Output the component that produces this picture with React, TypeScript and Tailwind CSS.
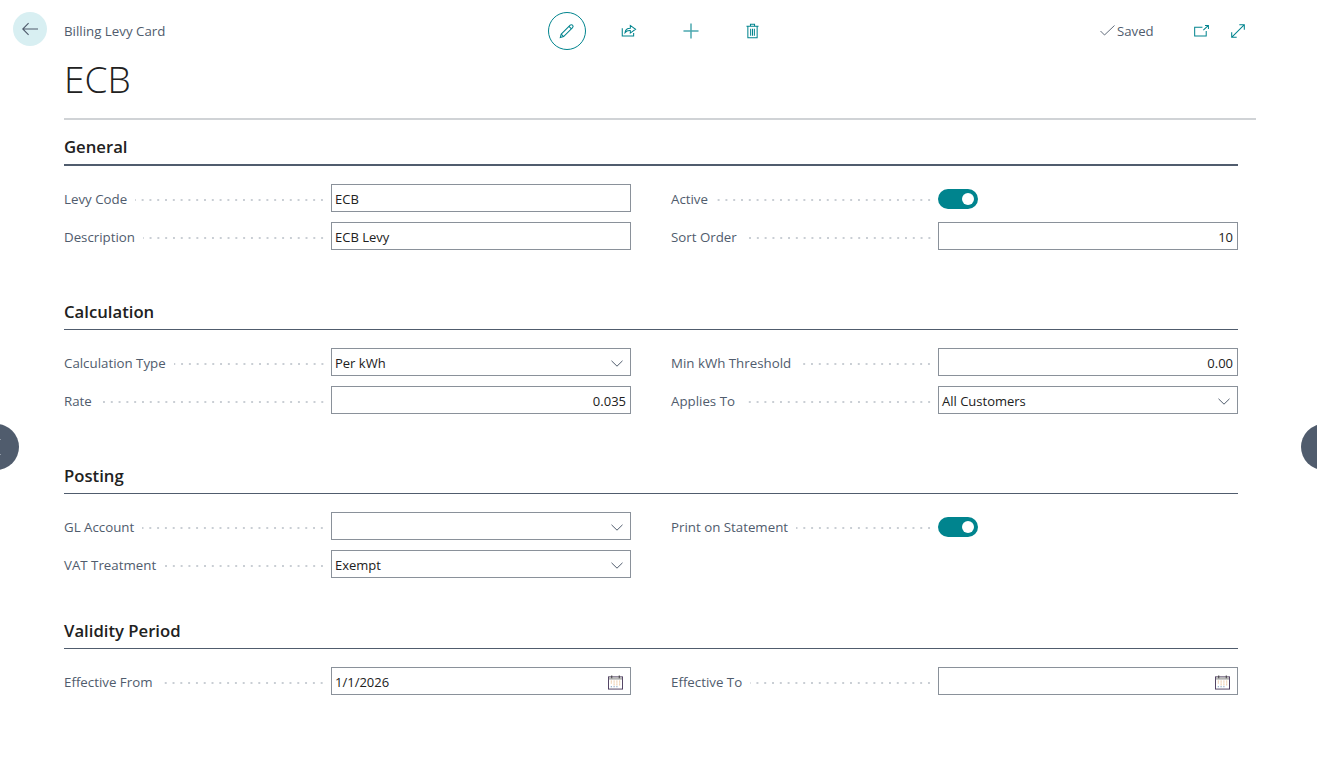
const teal = "#00848e";

function Pencil() {
  return (
    <svg width="16" height="16" viewBox="0 0 18 18" fill="none" stroke={teal} strokeWidth="1.200">
      <path d="M2.5 12.5 12.6 2.400c.7-.7 1.800-.7 2.600.1.800.8.800 1.900.1 2.600L5.200 15.200 1.500 16.300z" />
      <path d="M11.200 3.800l2.800 2.800M2.500 12.500l2.700 2.700" />
    </svg>
  );
}

function Share() {
  return (
    <svg width="16" height="14" viewBox="0 0 17 16" fill="none" stroke={teal} strokeWidth="1.200">
      <path d="M.8 6v8.800h13V11.500" />
      <path d="M4 11c.2-3 2.300-5 6-5V2.800l6 4.400-6 4.300V8.700c-2.500-.2-4.600.5-6 2.300z" />
    </svg>
  );
}

function Plus() {
  return (
    <svg width="16" height="16" viewBox="0 0 17 17" stroke={teal} strokeWidth="1.600" opacity="0.7">
      <path d="M8.500.5v16M.5 8.500h16" />
    </svg>
  );
}

function Trash() {
  return (
    <svg width="13" height="16" viewBox="0 0 14 16" fill="none" stroke={teal} strokeWidth="1.100">
      <path d="M.5 2.800h13M2 2.800V15.300h10V2.800M4.800 2.800V.8h4.400v2M5 5.500v7.500M7 5.500v7.500M9 5.500v7.500" />
    </svg>
  );
}

function Popout() {
  return (
    <svg width="15" height="12" viewBox="0 0 16 13" fill="none" stroke={teal} strokeWidth="1.100">
      <path d="M9 2.500H.6v9.500h12.500V6.500" />
      <path d="M10 5.500 15.200.8M11.800.6h3.700v3.600" />
    </svg>
  );
}

function Expand() {
  return (
    <svg width="14" height="14" viewBox="0 0 16 16" fill="none" stroke={teal} strokeWidth="1.200">
      <path d="M1 15 15 1M9.500.8h5.700v5.700M.8 9.500v5.700h5.700" />
    </svg>
  );
}

function Chevron() {
  return (
    <svg width="12" height="7" viewBox="0 0 12 7" fill="none" stroke="#505c6d" strokeWidth="1" className="mt-[2px] shrink-0">
      <path d="M.5.800 6 6.200 11.500.8" />
    </svg>
  );
}

function CalendarIcon() {
  return (
    <svg width="15" height="15" viewBox="0 0 16 15" className="mt-[2px] shrink-0">
      <rect x="0.500" y="1.500" width="15" height="13" fill="#fff" stroke="#4a3a5c" />
      <rect x="1" y="2" width="14" height="2.500" fill="#b5b5b5" />
      <path d="M4 0v3M12 0v3" stroke="#333" />
      <path d="M3 6h1M6 6h1M9 6h1M12 6h1M3 8h1M6 8h1M9 8h1M12 8h1M6 10h1M9 10h1M12 10h1" stroke="#e0a468" />
      <path d="M3 12h1M6 12h1M9 12h1" stroke="#4a78a8" />
    </svg>
  );
}

function Toggle() {
  return (
    <div className="mt-[2px] flex h-[20px] w-[40px] items-center justify-end rounded-full bg-[#00848e] pr-[4px]">
      <div className="h-[12px] w-[12px] rounded-full bg-white" />
    </div>
  );
}

type Field = {
  label: string;
  value?: string;
  kind?: "text" | "number" | "select" | "date" | "toggle";
};

function FieldRow({ field }: { field: Field }) {
  const kind = field.kind ?? "text";
  return (
    <div className="flex h-[28px] items-center">
      <div className="flex h-[28px] w-[267px] shrink-0 items-center pt-[3px] pr-[5px]">
        <span className="text-[13.3px] whitespace-nowrap text-[#505c6d]">{field.label}</span>
        <span className="ml-[8px] h-[4px] flex-1 bg-[radial-gradient(circle,#c9ced4_1px,transparent_1.2px)] bg-[length:7.8px_4px] bg-right bg-repeat-x" />
      </div>
      {kind === "toggle" ? (
        <Toggle />
      ) : (
        <div className="flex h-[28px] w-[300px] items-center justify-between border border-[#8a919a] bg-white pr-[7px] pl-[3px] text-[13px] text-[#212121]">
          {kind === "number" ? (
            <span className="-mr-[3px] ml-auto pt-[4px]">{field.value}</span>
          ) : (
            <span className="pt-[4px]">{field.value}</span>
          )}
          {kind === "select" && <Chevron />}
          {kind === "date" && <CalendarIcon />}
        </div>
      )}
    </div>
  );
}

type Section = {
  title: string;
  left: Field[];
  right: Field[];
  ruleClass: string;
  bodyClass: string;
};

const sections: Section[] = [
  {
    title: "General",
    ruleClass: "border-b-2 border-[#505c6d] leading-[24px]",
    bodyClass: "h-[133px]",
    left: [
      { label: "Levy Code", value: "ECB" },
      { label: "Description", value: "ECB Levy" },
    ],
    right: [
      { label: "Active", kind: "toggle" },
      { label: "Sort Order", value: "10", kind: "number" },
    ],
  },
  {
    title: "Calculation",
    ruleClass: "border-b border-[#505c6d] leading-[25px]",
    bodyClass: "h-[133px]",
    left: [
      { label: "Calculation Type", value: "Per kWh", kind: "select" },
      { label: "Rate", value: "0.035", kind: "number" },
    ],
    right: [
      { label: "Min kWh Threshold", value: "0.00", kind: "number" },
      { label: "Applies To", value: "All Customers", kind: "select" },
    ],
  },
  {
    title: "Posting",
    ruleClass: "border-b border-[#505c6d] leading-[25px]",
    bodyClass: "h-[124px]",
    left: [
      { label: "GL Account", value: "", kind: "select" },
      { label: "VAT Treatment", value: "Exempt", kind: "select" },
    ],
    right: [{ label: "Print on Statement", kind: "toggle" }],
  },
  {
    title: "Validity Period",
    ruleClass: "border-b border-[#505c6d] leading-[25px]",
    bodyClass: "",
    left: [{ label: "Effective From", value: "1/1/2026", kind: "date" }],
    right: [{ label: "Effective To", value: "", kind: "date" }],
  },
];

export default function App() {
  return (
    <div className="relative h-[759px] w-[1317px] overflow-hidden bg-white font-['Open_Sans','Liberation_Sans',sans-serif]">
      {/* Page header */}
      <div className="flex h-[62px] items-center pl-[13px]">
        <button className="-mt-[4px] flex h-[34px] w-[34px] items-center justify-center rounded-full bg-[#d8eff2]">
          <svg width="16" height="14" viewBox="0 0 17 14" fill="none" stroke="#505c6d" strokeWidth="1.200">
            <path d="M17 7H.8M7 .8.800 7 7 13.200" />
          </svg>
        </button>
        <span className="ml-[17px] w-[484px] pt-[1px] text-[13.3px] text-[#505c6d]">Billing Levy Card</span>
        <div className="flex h-[38px] w-[38px] items-center justify-center rounded-full border border-[#00848e]">
          <Pencil />
        </div>
        <div className="ml-[35px] flex -translate-y-[1px]"><Share /></div>
        <div className="ml-[46px] flex"><Plus /></div>
        <div className="ml-[47px] flex"><Trash /></div>
        <div className="ml-[341px] flex items-center gap-[2px] text-[13.2px] text-[#505c6d]">
          <svg width="15" height="11" viewBox="0 0 15 11" fill="none" stroke="#505c6d" strokeWidth="0.900">
            <path d="M.5 6 4.500 10 14.500.5" />
          </svg>
          <span className="pt-[2px]">Saved</span>
        </div>
        <div className="ml-[40px] flex"><Popout /></div>
        <div className="ml-[22px] flex"><Expand /></div>
      </div>

      <h1 className="-mt-[2px] h-[38px] pl-[64px] text-[37px] leading-[38px] font-light text-[#212121]">ECB</h1>
      <div className="mt-[20px] ml-[64px] h-[2px] w-[1192px] bg-[#d0d3d6]" />

      {/* Sections */}
      <div className="mr-[79px] ml-[64px] pt-[15px]">
        {sections.map((section) => (
          <section key={section.title}>
            <h2 className={`h-[31px] text-[16.7px] font-semibold text-[#212121] ${section.ruleClass}`}>
              {section.title}
            </h2>
            <div className={`grid grid-cols-2 gap-x-[40px] pt-[18px] ${section.bodyClass}`}>
              <div className="flex flex-col gap-[10px]">
                {section.left.map((f) => (
                  <FieldRow key={f.label} field={f} />
                ))}
              </div>
              <div className="flex flex-col gap-[10px]">
                {section.right.map((f) => (
                  <FieldRow key={f.label} field={f} />
                ))}
              </div>
            </div>
          </section>
        ))}
      </div>

      {/* Side paging handles */}
      <div className="absolute top-[424px] -left-[27px] h-[46px] w-[46px] rounded-full bg-[#505c6d]">
        <div className="absolute top-[15px] left-[27px] h-[1px] w-[1px] bg-[#8f98a5]" />
        <div className="absolute top-[30px] left-[27px] h-[1px] w-[1px] bg-[#8f98a5]" />
      </div>
      <div className="absolute top-[424px] -right-[30px] h-[46px] w-[46px] rounded-full bg-[#505c6d]" />
    </div>
  );
}
